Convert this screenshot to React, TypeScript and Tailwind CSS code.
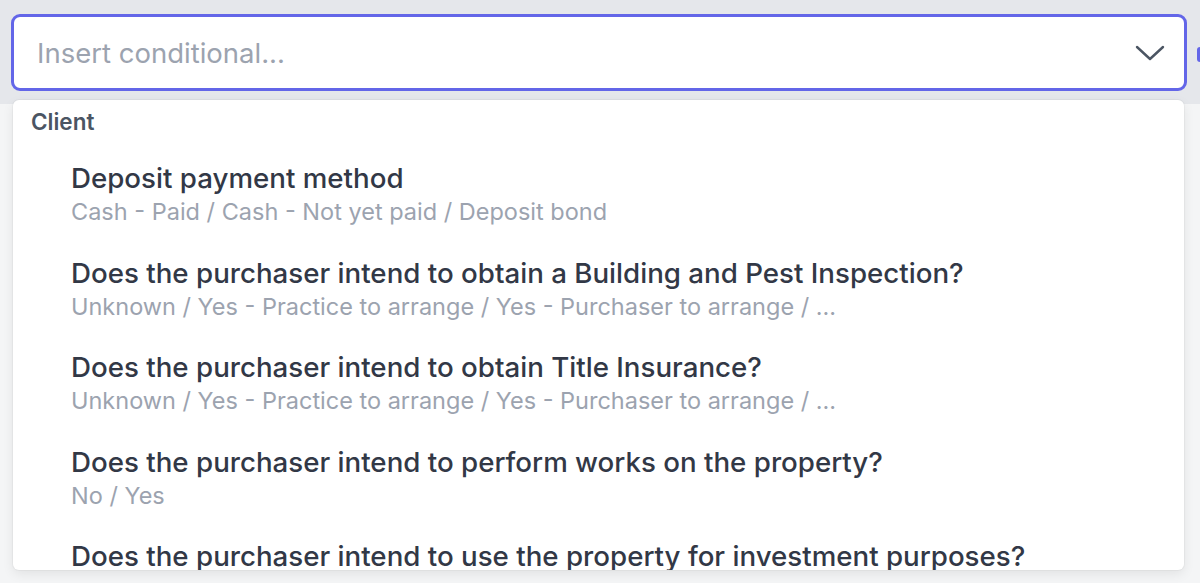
import React from "react";

const items = [
  { t: "Deposit payment method", s: "Cash - Paid / Cash - Not yet paid / Deposit bond" },
  { t: "Does the purchaser intend to obtain a Building and Pest Inspection?", s: "Unknown / Yes - Practice to arrange / Yes - Purchaser to arrange / ..." },
  { t: "Does the purchaser intend to obtain Title Insurance?", s: "Unknown / Yes - Practice to arrange / Yes - Purchaser to arrange / ..." },
  { t: "Does the purchaser intend to perform works on the property?", s: "No / Yes" },
  { t: "Does the purchaser intend to use the property for investment purposes?", s: "No / Yes" },
];

export default function App() {
  return (
    <div className="relative h-[583px] w-[1200px] overflow-hidden bg-[#f4f5f6] font-['Inter',sans-serif]">
      <div className="flex h-[104px] items-start gap-[10px] bg-[#e5e7eb] pl-[11px] pt-[14px]">
        <div className="flex h-[77px] w-[1176px] shrink-0 items-center justify-between rounded-[9px] border-[3px] border-[#6366e8] bg-white pl-[23px] pr-[19px]">
          <span className="text-[27.5px] leading-[34px] text-[#9ca3af]">Insert conditional...</span>
          <svg width="30" height="18" viewBox="0 0 30 18" fill="none">
            <polyline points="2,3 15,15 28,3" stroke="#4b5563" strokeWidth="2.4" strokeLinecap="round" strokeLinejoin="round" />
          </svg>
        </div>
        <div className="mt-[33px] h-[15px] w-[8px] shrink-0 rounded-l-[3px] bg-[#6366e8]" />
      </div>
      <div className="absolute left-[13px] top-[100px] h-[470px] w-[1171px] overflow-hidden rounded-[6px] bg-white shadow-[0_4px_12px_rgba(0,0,0,0.08),0_0_0_1px_rgba(0,0,0,0.03)]">
        <div className="pl-[18px] pt-[7px] text-[22.5px] font-semibold leading-[30px] text-[#4b5563]">Client</div>
        <div className="flex flex-col">
          {items.map((it) => (
            <div key={it.t} className="flex h-[94.5px] shrink-0 flex-col pl-[58px] pt-[24px]">
              <div className="text-[27.7px] font-medium leading-[34px] text-[#323846]">{it.t}</div>
              <div className="mt-[3px] text-[23.5px] leading-[28px] text-[#9ca3af]">{it.s}</div>
            </div>
          ))}
        </div>
      </div>
    </div>
  );
}
